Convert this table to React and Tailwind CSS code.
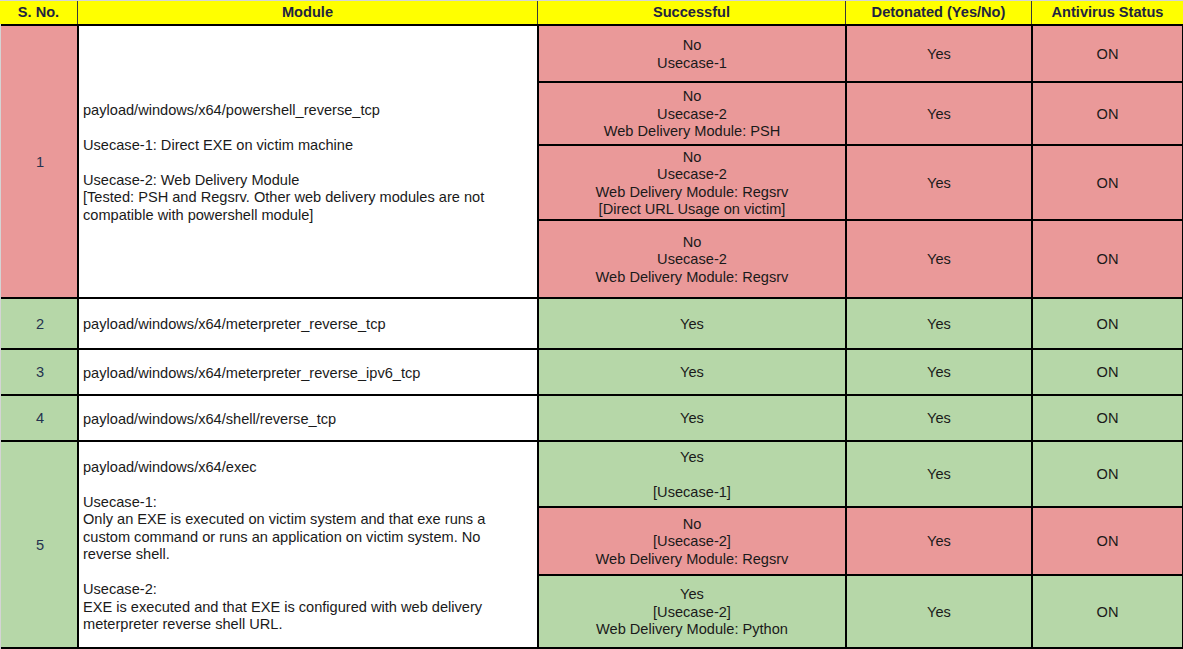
import React from "react";

const PINK = "bg-[#ea9999]";
const GREEN = "bg-[#b6d7a8]";

const rows = [
  {
    no: "1",
    noColor: PINK,
    module: [
      "payload/windows/x64/powershell_reverse_tcp",
      "",
      "Usecase-1: Direct EXE on victim machine",
      "",
      "Usecase-2: Web Delivery Module",
      "[Tested: PSH and Regsrv. Other web delivery modules are not",
      "compatible with powershell module]",
    ],
    subs: [
      { color: PINK, ok: ["No", "Usecase-1"] },
      { color: PINK, ok: ["No", "Usecase-2", "Web Delivery Module: PSH"] },
      {
        color: PINK,
        ok: ["No", "Usecase-2", "Web Delivery Module: Regsrv", "[Direct URL Usage on victim]"],
      },
      { color: PINK, ok: ["No", "Usecase-2", "Web Delivery Module: Regsrv"] },
    ],
  },
  {
    no: "2",
    noColor: GREEN,
    module: ["payload/windows/x64/meterpreter_reverse_tcp"],
    subs: [{ color: GREEN, ok: ["Yes"] }],
  },
  {
    no: "3",
    noColor: GREEN,
    module: ["payload/windows/x64/meterpreter_reverse_ipv6_tcp"],
    subs: [{ color: GREEN, ok: ["Yes"] }],
  },
  {
    no: "4",
    noColor: GREEN,
    module: ["payload/windows/x64/shell/reverse_tcp"],
    subs: [{ color: GREEN, ok: ["Yes"] }],
  },
  {
    no: "5",
    noColor: GREEN,
    module: [
      "payload/windows/x64/exec",
      "",
      "Usecase-1:",
      "Only an EXE is executed on victim system and that exe runs a",
      "custom command or runs an application on victim system. No",
      "reverse shell.",
      "",
      "Usecase-2:",
      "EXE is executed and that EXE is configured with web delivery",
      "meterpreter reverse shell URL.",
    ],
    subs: [
      { color: GREEN, ok: ["Yes", "", "[Usecase-1]"] },
      { color: PINK, ok: ["No", "[Usecase-2]", "Web Delivery Module: Regsrv"] },
      { color: GREEN, ok: ["Yes", "[Usecase-2]", "Web Delivery Module: Python"] },
    ],
  },
];

const spanClass = { 1: "row-span-1", 3: "row-span-3", 4: "row-span-4" };

function Lines({ lines }) {
  return (
    <div>
      {lines.map((l, i) => (
        <div key={i} className="whitespace-nowrap h-[17.5px]">
          {l}
        </div>
      ))}
    </div>
  );
}

export default function App() {
  return (
    <div className="w-[1183px] h-[649px] bg-white font-['Liberation_Sans',Arial,sans-serif] text-[14.6px] leading-[17.5px] text-[#1a1a1a] overflow-hidden">
      <div className="flex h-[24px] border-t border-[#d4d4d4] bg-[#ffff00] font-bold text-[#1f2440]">
        <div className="w-[78px] border-r border-[#3a3a3a] flex items-center justify-center">S. No.</div>
        <div className="w-[460px] border-r border-[#3a3a3a] flex items-center justify-center">Module</div>
        <div className="w-[308px] border-r border-[#3a3a3a] flex items-center justify-center">Successful</div>
        <div className="w-[186px] border-r border-[#3a3a3a] flex items-center justify-center">Detonated (Yes/No)</div>
        <div className="flex-1 flex items-center justify-center">Antivirus Status</div>
      </div>
      <div className="grid grid-cols-[76px_458px_306px_184px_149px] grid-rows-[55px_61px_73px_76px_49px_44px_44px_64px_66px_71px] gap-[2px] bg-black py-[2px] pr-px border-l border-[#d4d4d4]">
        {rows.map((r) => (
          <React.Fragment key={r.no}>
            <div
              className={`${r.noColor} ${spanClass[r.subs.length]} flex items-center justify-center pt-[2px] pl-[2px] text-[#24324f]`}
            >
              {r.no}
            </div>
            <div className={`bg-white ${spanClass[r.subs.length]} flex items-center pt-[3px] pl-[4px]`}>
              <Lines lines={r.module} />
            </div>
            {r.subs.map((s, i) => (
              <React.Fragment key={i}>
                <div className={`${s.color} flex items-center justify-center pt-[2px] text-center`}>
                  <Lines lines={s.ok} />
                </div>
                <div className={`${s.color} flex items-center justify-center pt-[2px]`}>Yes</div>
                <div className={`${s.color} flex items-center justify-center pt-[2px]`}>ON</div>
              </React.Fragment>
            ))}
          </React.Fragment>
        ))}
      </div>
    </div>
  );
}
